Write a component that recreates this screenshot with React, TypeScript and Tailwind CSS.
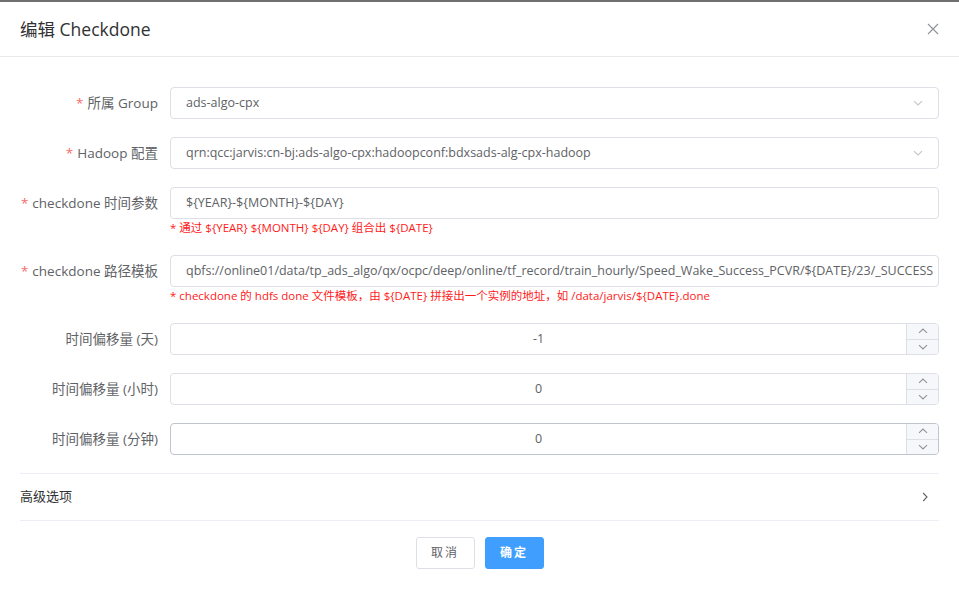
import React from "react";

const FONT = "font-['Open_Sans','Noto_Sans_CJK_SC',sans-serif]";

function Label({ text, required }: { text: string; required?: boolean }) {
  return (
    <div className="w-[150px] shrink-0 whitespace-nowrap pr-3 text-right text-[13.5px] leading-8 text-[#606266]">
      {required && <span className="mr-1 text-[#f56c6c]">*</span>}
      {text}
    </div>
  );
}

function ChevronDown({ className }: { className?: string }) {
  return (
    <svg viewBox="0 0 12 12" className={className} fill="none" stroke="currentColor" strokeWidth="1.1">
      <path d="M2 4.2 6 8l4-3.8" />
    </svg>
  );
}

function ChevronUp({ className }: { className?: string }) {
  return (
    <svg viewBox="0 0 12 12" className={className} fill="none" stroke="currentColor" strokeWidth="1.1">
      <path d="M2 7.8 6 4l4 3.8" />
    </svg>
  );
}

function SelectRow({ label, value }: { label: string; value: string }) {
  return (
    <div className="mb-[18px] flex">
      <Label text={label} required />
      <div className="flex h-8 flex-1 items-center rounded border border-[#dcdfe6] pl-[15px] pr-[14px]">
        <span className="flex-1 truncate text-[12.5px] text-[#606266]">{value}</span>
        <ChevronDown className="h-3 w-3 text-[#c0c4cc]" />
      </div>
    </div>
  );
}

function TextRow({ label, value, help }: { label: string; value: string; help: string }) {
  return (
    <div className="mb-[18px] flex">
      <Label text={label} required />
      <div className="min-w-0 flex-1">
        <div className="flex h-8 items-center overflow-hidden rounded border border-[#dcdfe6] px-[15px]">
          <span className="whitespace-nowrap text-[12.5px] text-[#606266]">{value}</span>
        </div>
        <div className="h-[18px] whitespace-nowrap text-[11.5px] leading-[18px] text-[#ff1a1a]">{help}</div>
      </div>
    </div>
  );
}

function NumberRow({ label, value, dark }: { label: string; value: string; dark?: boolean }) {
  return (
    <div className="mb-[18px] flex">
      <Label text={label} />
      <div
        className={
          dark
            ? "flex h-8 flex-1 overflow-hidden rounded border border-[#c0c4cc]"
            : "flex h-8 flex-1 overflow-hidden rounded border border-[#dcdfe6]"
        }
      >
        <div className="flex flex-1 items-center justify-center pl-[15px] pr-[15px] text-[12.5px] text-[#606266]">
          {value}
        </div>
        <div className="flex w-8 flex-col border-l border-[#dcdfe6] bg-[#f5f7fa] text-[#909399]">
          <div className="flex flex-1 items-center justify-center border-b border-[#dcdfe6]">
            <ChevronUp className="h-3 w-3" />
          </div>
          <div className="flex flex-1 items-center justify-center">
            <ChevronDown className="h-3 w-3" />
          </div>
        </div>
      </div>
    </div>
  );
}

export default function App() {
  return (
    <div className={`${FONT} h-[589px] w-[959px] overflow-hidden border-t-2 border-[#707070] bg-white`}>
      {/* header */}
      <div className="flex h-[55px] items-center justify-between border-b border-[#e8e8e8] pl-5 pr-5">
        <span className="text-[17.5px] text-[#303133]">编辑 Checkdone</span>
        <svg viewBox="0 0 12 12" className="h-[12px] w-[12px] text-[#909399]" stroke="currentColor" strokeWidth="1.1">
          <path d="M1 1l10 10M11 1 1 11" />
        </svg>
      </div>

      {/* body */}
      <div className="px-5 pt-[30px]">
        <SelectRow label="所属 Group" value="ads-algo-cpx" />
        <SelectRow label="Hadoop 配置" value="qrn:qcc:jarvis:cn-bj:ads-algo-cpx:hadoopconf:bdxsads-alg-cpx-hadoop" />
        <TextRow
          label="checkdone 时间参数"
          value="${YEAR}-${MONTH}-${DAY}"
          help="* 通过 ${YEAR} ${MONTH} ${DAY} 组合出 ${DATE}"
        />
        <TextRow
          label="checkdone 路径模板"
          value="qbfs://online01/data/tp_ads_algo/qx/ocpc/deep/online/tf_record/train_hourly/Speed_Wake_Success_PCVR/${DATE}/23/_SUCCESS"
          help="* checkdone 的 hdfs done 文件模板，由 ${DATE} 拼接出一个实例的地址，如 /data/jarvis/${DATE}.done"
        />
        <NumberRow label="时间偏移量 (天)" value="-1" />
        <NumberRow label="时间偏移量 (小时)" value="0" />
        <NumberRow label="时间偏移量 (分钟)" value="0" dark />

        {/* advanced */}
        <div className="flex h-[48px] items-center justify-between border-y border-[#ebeef5]">
          <span className="text-[13px] text-[#303133]">高级选项</span>
          <svg viewBox="0 0 12 12" className="mr-[8px] h-3 w-3 text-[#606266]" fill="none" stroke="currentColor" strokeWidth="1.1">
            <path d="M4.2 2 8 6l-3.8 4" />
          </svg>
        </div>

        {/* footer */}
        <div className="flex justify-center gap-[10px] pt-4">
          <button className="h-8 w-[59px] rounded-[3px] border border-[#dcdfe6] bg-white text-[12px] tracking-[2px] text-[#606266]">
            取消
          </button>
          <button className="h-8 w-[59px] rounded-[3px] border border-[#409eff] bg-[#409eff] text-[12px] font-semibold tracking-[2px] text-white">
            确定
          </button>
        </div>
      </div>
    </div>
  );
}
